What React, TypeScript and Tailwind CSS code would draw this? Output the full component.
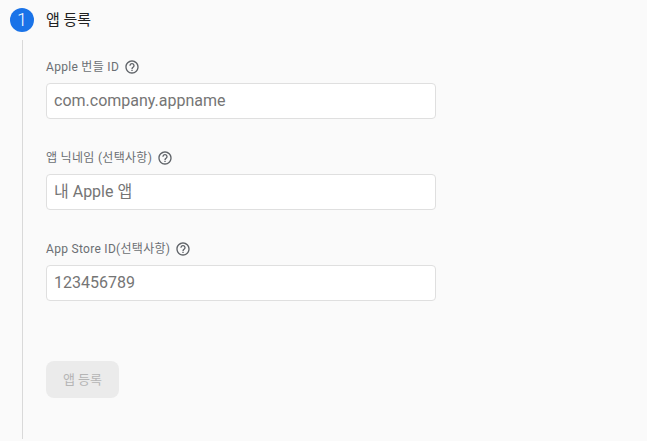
const font = { fontFamily: "Roboto, 'Noto Sans CJK KR', sans-serif" };

function Help() {
    return (
        <svg width="16" height="16" viewBox="0 0 24 24" fill="#5f6368" className="ml-[5px]">
            <path d="M11 18h2v-2h-2v2zm1-16C6.48 2 2 6.48 2 12s4.48 10 10 10 10-4.48 10-10S17.52 2 12 2zm0 18c-4.41 0-8-3.59-8-8s3.59-8 8-8 8 3.59 8 8-3.59 8-8 8zm0-14c-2.21 0-4 1.79-4 4h2c0-1.1.9-2 2-2s2 .9 2 2c0 2-3 1.75-3 5h2c0-2.25 3-2.5 3-5 0-2.21-1.79-4-4-4z" />
        </svg>
    );
}

function Field({ label, placeholder }: { label: string; placeholder: string }) {
    return (
        <div className="h-[91px]">
            <div className="flex items-center h-4 text-xs leading-4 tracking-[0.3px] text-[#6b6f73]">
                {label}
                <Help />
            </div>
            <div className="mt-2 flex items-center w-[390px] h-9 px-[7px] bg-white rounded border border-[#dfdfdf] text-base text-[#757575]">
                {placeholder}
            </div>
        </div>
    );
}

export default function App() {
    return (
        <div className="h-[441px] w-[647px] overflow-hidden bg-[#fafafa] antialiased" style={font}>
            <div className="flex items-center pl-[10px] pt-2 h-[32px]">
                <div className="flex items-center justify-center w-6 h-6 rounded-full bg-[#1a73e8] text-white text-lg font-light">1</div>
                <div className="ml-3 text-[15px] text-[#212121]">앱 등록</div>
            </div>
            <div className="ml-[22px] mt-2 h-[399px] border-l border-[#d9d9d9] pl-[23px] pt-[19px]">
                <Field label="Apple 번들 ID" placeholder="com.company.appname" />
                <Field label="앱 닉네임 (선택사항)" placeholder="내 Apple 앱" />
                <Field label="App Store ID(선택사항)" placeholder="123456789" />
                <button className="mt-[29px] w-[73px] h-[37px] rounded-lg bg-[#ebebeb] text-[13px] text-[#b5b5b5]">앱 등록</button>
            </div>
        </div>
    );
}
